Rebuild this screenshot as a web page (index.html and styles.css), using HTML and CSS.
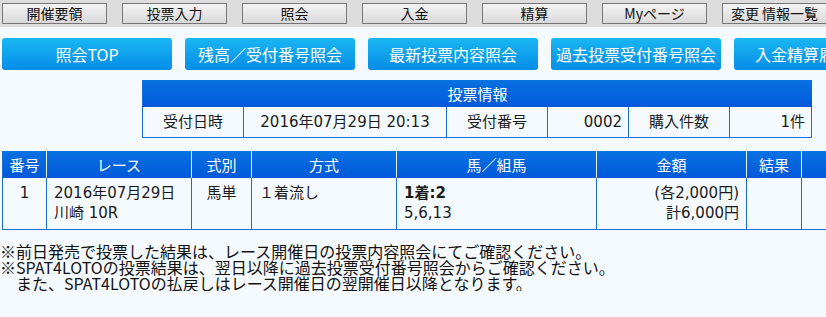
FILE: index.html
```html
<!DOCTYPE html>
<html lang="ja">
<head>
<meta charset="utf-8">
<title>照会</title>
<link rel="stylesheet" href="styles.css">
</head>
<body>
<div class="nav">
  <a class="nav-btn">開催要領</a>
  <a class="nav-btn">投票入力</a>
  <a class="nav-btn">照会</a>
  <a class="nav-btn">入金</a>
  <a class="nav-btn">精算</a>
  <a class="nav-btn">Myページ</a>
  <a class="nav-btn">変更 情報一覧</a>
</div>
<div class="tabs">
  <a class="tab">照会TOP</a>
  <a class="tab">残高／受付番号照会</a>
  <a class="tab">最新投票内容照会</a>
  <a class="tab">過去投票受付番号照会</a>
  <a class="tab">入金精算履歴照会</a>
</div>
<div class="info">
  <div class="info-head">投票情報</div>
  <div class="cell c-label">受付日時</div>
  <div class="cell c-center">2016年07月29日 20:13</div>
  <div class="cell c-label">受付番号</div>
  <div class="cell c-right">0002</div>
  <div class="cell c-label">購入件数</div>
  <div class="cell c-right">1件</div>
</div>
<div class="list-wrap">
  <div class="list">
    <div class="h">番号</div>
    <div class="h">レース</div>
    <div class="h">式別</div>
    <div class="h">方式</div>
    <div class="h">馬／組馬</div>
    <div class="h">金額</div>
    <div class="h">結果</div>
    <div class="h"></div>
    <div class="d d-center">1</div>
    <div class="d">2016年07月29日<br>川崎 10R</div>
    <div class="d d-center">馬単</div>
    <div class="d">１着流し</div>
    <div class="d"><b>1着:2</b><br>5,6,13</div>
    <div class="d d-right">(各2,000円)<br>計6,000円</div>
    <div class="d"></div>
    <div class="d"></div>
  </div>
</div>
<div class="notes">
  <p>※前日発売で投票した結果は、レース開催日の投票内容照会にてご確認ください。</p>
  <p>※SPAT4LOTOの投票結果は、翌日以降に過去投票受付番号照会からご確認ください。</p>
  <p>　また、SPAT4LOTOの払戻しはレース開催日の翌開催日以降となります。</p>
</div>
</body>
</html>
```

FILE: styles.css
```css
html, body {
  margin: 0;
  padding: 0;
  overflow: hidden;
}
body {
  background: #f5faff;
  color: #1a1a1a;
  font-family: "Noto Sans CJK JP", sans-serif;
  width: 826px;
}
.nav {
  height: 27px;
  box-sizing: border-box;
  padding: 3px 0 0 2px;
  background: #dddddd;
  display: flex;
  gap: 15px;
  overflow: hidden;
}
.nav-btn {
  flex: 0 0 105px;
  height: 21px;
  box-sizing: border-box;
  border: 1px solid #767676;
  background: linear-gradient(#f3f3f3, #d9d9d9);
  font-size: 14px;
  line-height: 19px;
  text-align: center;
  color: #111;
  white-space: nowrap;
}
.tabs {
  margin-top: 11px;
  padding-left: 2px;
  display: flex;
  gap: 13px;
  overflow: hidden;
}
.tab {
  flex: 0 0 170px;
  height: 32px;
  border-radius: 3px;
  background: linear-gradient(#19b6f2, #068de8);
  color: #fff;
  font-size: 16px;
  line-height: 32px;
  text-align: center;
  white-space: nowrap;
}
.info {
  margin: 10px 0 0 142px;
  width: 670px;
  box-sizing: border-box;
  border-left: 1px solid #1a6fe0;
  display: grid;
  grid-template-columns: 101px 203px 101px 81px 101px 82px;
  font-family: "DejaVu Sans", "Noto Sans CJK JP", sans-serif;
  font-size: 15px;
}
.info-head {
  grid-column: 1 / -1;
  height: 27px;
  background: linear-gradient(#0a72e2, #0058d9);
  color: #fff;
  font-family: "Noto Sans CJK JP", sans-serif;
  line-height: 27px;
  text-align: center;
}
.cell {
  height: 31px;
  box-sizing: border-box;
  border-right: 1px solid #1a6fe0;
  border-bottom: 1px solid #1a6fe0;
  line-height: 30px;
  padding: 0 6px;
  white-space: nowrap;
}
.c-label, .c-center { text-align: center; }
.c-right { text-align: right; }
.list-wrap {
  margin-top: 13px;
  padding-left: 2px;
  overflow: hidden;
}
.list {
  display: grid;
  grid-template-columns: 44px 145px 60px 145px 200px 150px 55px 60px;
  width: max-content;
  border-left: 1px solid #1a6fe0;
  font-family: "DejaVu Sans", "Noto Sans CJK JP", sans-serif;
  font-size: 15px;
}
.h {
  height: 27px;
  box-sizing: border-box;
  border-right: 1px solid #e8f2ff;
  background: linear-gradient(#0a72e2, #0058d9);
  color: #fff;
  font-family: "Noto Sans CJK JP", sans-serif;
  line-height: 27px;
  text-align: center;
}
.d {
  box-sizing: border-box;
  border-right: 1px solid #1a6fe0;
  border-bottom: 1px solid #1a6fe0;
  padding: 5px 7px 6px;
  line-height: 20px;
  white-space: nowrap;
}
.d-center { text-align: center; }
.d-right { text-align: right; }
.notes {
  margin-top: 13px;
  font-size: 16px;
  line-height: 16px;
  color: #111;
}
.notes p {
  margin: 0;
  white-space: nowrap;
}
```
